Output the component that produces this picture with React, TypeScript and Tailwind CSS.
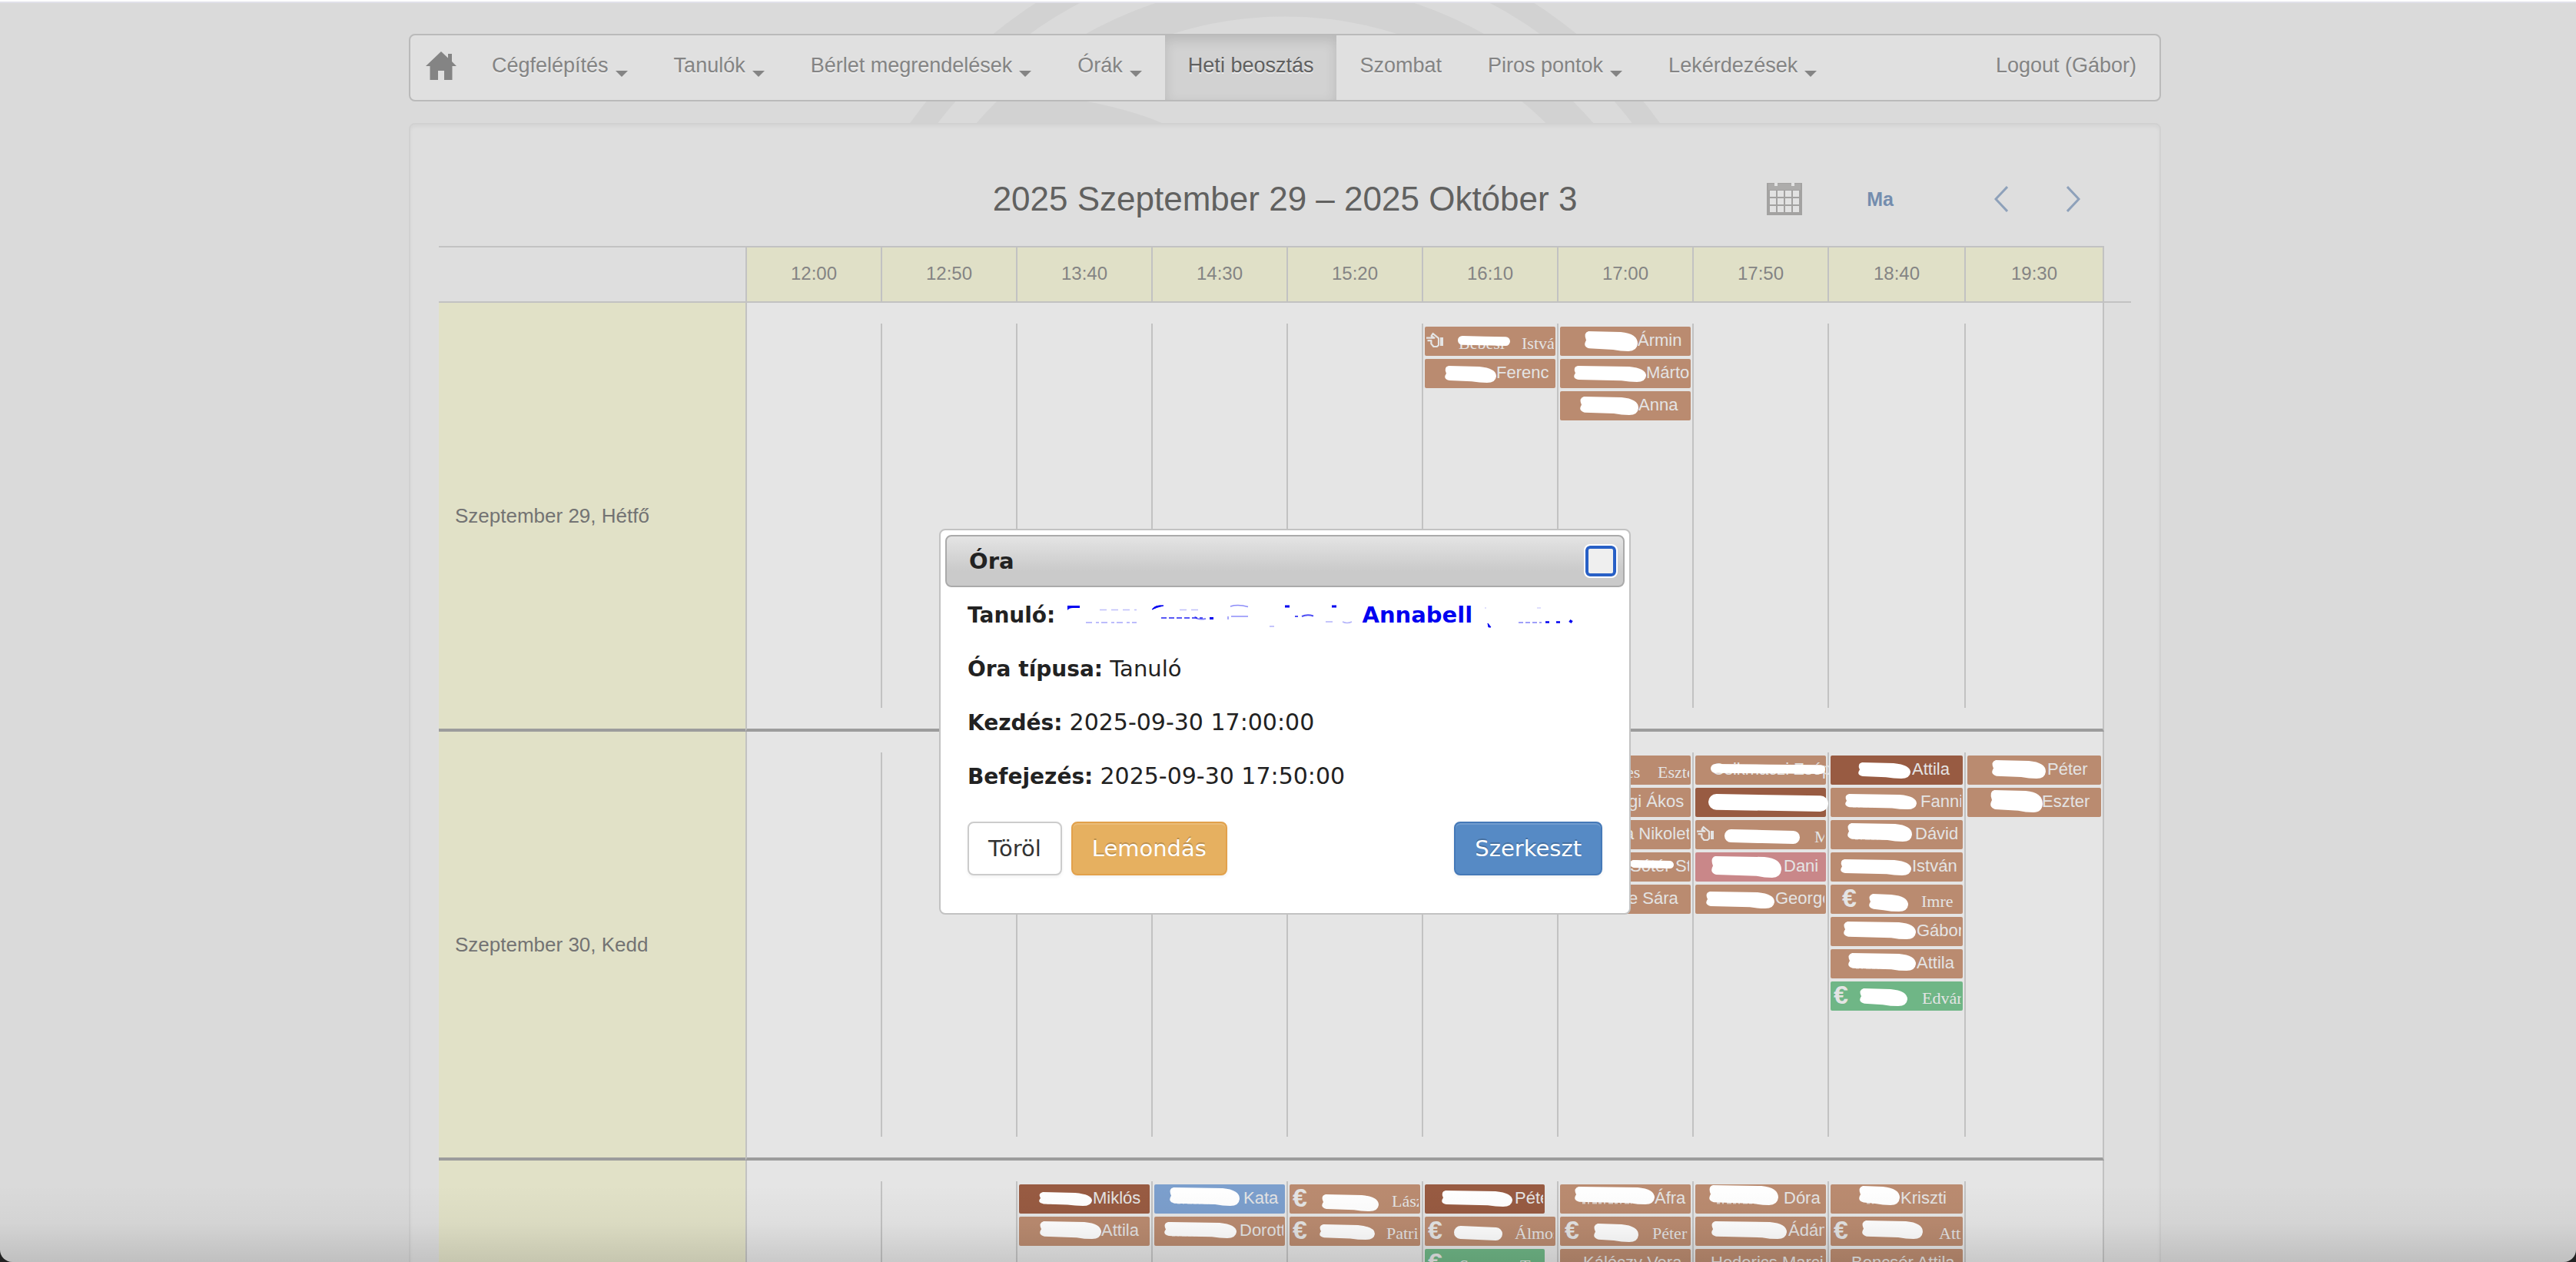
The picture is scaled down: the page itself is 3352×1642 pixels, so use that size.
import React from "react";

type Mask = [x0: number, y0: number, x1: number, y1: number];

interface Lesson {
  name?: string;
  /** Horizontal start of the visible name inside the chip. */
  at: number;
  mask?: Mask;
  band?: boolean;
  under?: string;
  underAt?: number;
  icon?: "euro" | "hand";
  iconAt?: number;
  tone?: "dark" | "blue" | "pink" | "green";
  short?: boolean;
}

const TONES = {
  base: "bg-[#ba8b70]",
  dark: "bg-[#985b42]",
  blue: "bg-[#7c9fcd]",
  pink: "bg-[#c98789]",
  green: "bg-[#6fb686]",
};

const TIMES = ["12:00", "12:50", "13:40", "14:30", "15:20", "16:10", "17:00", "17:50", "18:40", "19:30"];

const DAYS: { label: string; lessons: Record<string, Lesson[]> }[] = [
  {
    label: "Szeptember 29, Hétfő",
    lessons: {
      "16:10": [
        { icon: "hand", iconAt: 2, name: "István", at: 126, mask: [43, 12, 111, 25], band: true, under: "Bebesi", underAt: 44 },
        { name: "Ferenc", at: 93, mask: [26, 9, 93, 31] },
      ],
      "17:00": [
        { name: "Ármin", at: 101, mask: [32, 6, 101, 32] },
        { name: "Márton", at: 112, mask: [18, 9, 112, 30] },
        { name: "Anna", at: 102, mask: [26, 7, 102, 31] },
      ],
    },
  },
  {
    label: "Szeptember 30, Kedd",
    lessons: {
      "17:00": [
        { icon: "euro", iconAt: 4, name: "Eszter", at: 127, under: "es", underAt: 86 },
        { name: "gi Ákos", at: 89 },
        { name: "a Nikolett", at: 84 },
        { name: "Stefi", at: 150, mask: [91, 10, 148, 21], band: true, under: "Sótér", underAt: 91 },
        { name: "e Sára", at: 89 },
      ],
      "17:50": [
        { at: 170, mask: [20, 11, 169, 24], band: true, under: "Csikmaczi Zsóp", underAt: 22 },
        { at: 170, tone: "dark", mask: [17, 8, 173, 31], band: true },
        { icon: "hand", iconAt: 2, name: "Márk", at: 155, mask: [38, 12, 136, 31], band: true },
        { name: "Dani", at: 115, tone: "pink", mask: [21, 5, 112, 33] },
        { name: "George", at: 104, mask: [14, 9, 103, 31] },
      ],
      "18:40": [
        { name: "Attila", at: 106, tone: "dark", mask: [36, 9, 104, 30] },
        { name: "Fanni", at: 117, mask: [19, 8, 112, 28] },
        { name: "Dávid", at: 110, mask: [22, 4, 106, 28] },
        { name: "István", at: 106, mask: [13, 9, 105, 30] },
        { icon: "euro", iconAt: 15, name: "Imre", at: 118, mask: [50, 12, 101, 35] },
        { name: "Gábor", at: 112, mask: [17, 6, 111, 29] },
        { name: "Attila", at: 112, mask: [23, 5, 111, 28] },
        { icon: "euro", iconAt: 4, name: "Edvárd", at: 119, tone: "green", mask: [38, 9, 100, 32] },
      ],
      "19:30": [
        { name: "Péter", at: 104, mask: [32, 6, 102, 30] },
        { name: "Eszter", at: 97, mask: [30, 3, 98, 32] },
      ],
    },
  },
  {
    label: "Október 1, Szerda",
    lessons: {
      "13:40": [
        { name: "Miklós", at: 96, tone: "dark", mask: [26, 10, 95, 28] },
        { name: "Attila", at: 107, mask: [27, 6, 107, 29] },
      ],
      "14:30": [
        { name: "Kata", at: 116, tone: "blue", mask: [20, 4, 111, 28] },
        { name: "Dorottya", at: 111, mask: [13, 7, 107, 28] },
      ],
      "15:20": [
        { icon: "euro", iconAt: 4, name: "László", at: 133, mask: [42, 13, 116, 35] },
        { icon: "euro", iconAt: 4, name: "Patrik", at: 126, mask: [39, 10, 111, 30] },
      ],
      "16:10": [
        { name: "Péter", at: 117, tone: "dark", short: true, mask: [22, 8, 114, 29] },
        { icon: "euro", iconAt: 4, name: "Álmos", at: 117, mask: [38, 12, 101, 31], band: true },
        { icon: "euro", iconAt: 4, name: "Tamás", at: 124, tone: "green", short: true, under: "Szentes", underAt: 45 },
      ],
      "17:00": [
        { name: "Áfra", at: 123, mask: [19, 3, 123, 26] },
        { icon: "euro", iconAt: 6, name: "Péter", at: 120, mask: [44, 9, 102, 33] },
        { name: "Kálóczy Vera", at: 30 },
      ],
      "17:50": [
        { name: "Dóra", at: 115, mask: [18, 1, 108, 27] },
        { name: "Ádám", at: 121, mask: [21, 6, 119, 29] },
        { name: "Hederics Marci", at: 20 },
      ],
      "18:40": [
        { name: "Kriszti", at: 91, mask: [37, 2, 90, 27] },
        { icon: "euro", iconAt: 4, name: "Attila", at: 141, mask: [41, 5, 120, 29] },
        { name: "Bencsér Attila", at: 27 },
      ],
    },
  },
];

function Scribble({ mask, band, plain }: { mask: Mask; band?: boolean; plain: boolean }) {
  const [x0, y0, x1, y1] = mask;
  const h = y1 - y0;
  if (band) {
    const r = h * 0.45;
    return (
      <path
        d={`M${x0 + r} ${y0 + r} L${(x0 + x1) / 2} ${y0 + h / 2} L${x1 - r} ${y1 - r}`}
        fill="none"
        stroke="#fff"
        strokeWidth={r * 2}
        strokeLinecap="round"
        strokeLinejoin="round"
      />
    );
  }
  const d =
    `M${x0 + 5} ${y0} L${x1 - 22} ${y0 + 1} Q${x1} ${y0 + 3} ${x1} ${y0 + h * 0.62} ` +
    `Q${x1 - 1} ${y1} ${x1 - 12} ${y1} Q${x1 - 22} ${y1} ${x1 - 32} ${y1 - h * 0.08} ` +
    `L${x0 + 6} ${y0 + h * 0.86} Q${x0 - 3} ${y0 + h * 0.76} ${x0 + 2} ${y0 + h * 0.45} Q${x0 - 2} ${y0 + 2} ${x0 + 5} ${y0} Z`;
  return (
    <>
      {plain && (
        <path d={`M${x0 + 10} 24 H${x1 - 30}`} stroke="#e4e4e4" strokeWidth="3" strokeDasharray="4 3 2 4 6 2" opacity=".75" />
      )}
      <path d={d} fill="#fff" />
    </>
  );
}

function HandIcon({ x }: { x: number }) {
  return (
    <g transform={`translate(${x} 7)`}>
      <path
        d="M0 7.6 H10.5 L6.6 5.2 L8.6 2 L16 8.2 V17 L13.8 19 H9.4 L6.4 15.4 V11.2 H1.5"
        fill="none"
        stroke="#e4e4e4"
        strokeWidth="2.2"
        strokeLinejoin="round"
      />
      <path d="M18 7 H22 V18 H18 Z" fill="#e4e4e4" />
    </g>
  );
}

function LessonChip({ lesson }: { lesson: Lesson }) {
  const { name, at, mask, band, under, underAt, icon, iconAt = 4, tone, short } = lesson;
  const serif = Boolean(icon);
  return (
    <button
      type="button"
      className={`flex h-[38px] rounded-[2px] text-left text-[22px] leading-9 whitespace-pre text-[#e4e4e4] ${
        TONES[tone ?? "base"]
      } ${short ? "w-[156px]" : "w-full"} ${
        serif ? "font-['Liberation_Serif',serif]" : "font-['Liberation_Sans',sans-serif]"
      }`}
    >
      <svg width={at} height="38" className="shrink-0 overflow-visible" aria-hidden="true">
        {icon === "hand" && <HandIcon x={iconAt} />}
        {icon === "euro" && (
          <text x={iconAt} y="29" fontSize="34" fontWeight="700" fill="#e4e4e4" className="font-['Liberation_Sans',sans-serif]">
            €
          </text>
        )}
        {under && (
          <text x={underAt} y={serif ? 29 : 25} fontSize="22" fill="#e4e4e4">
            {under}
          </text>
        )}
        {mask && <Scribble mask={mask} band={band} plain={!under} />}
      </svg>
      <span className={`mr-[2px] min-w-0 flex-1 overflow-hidden ${serif ? "pt-1" : ""}`}>{name}</span>
    </button>
  );
}

const NAV = [
  { label: "Cégfelépítés", menu: true },
  { label: "Tanulók", menu: true },
  { label: "Bérlet megrendelések", menu: true },
  { label: "Órák", menu: true },
  { label: "Heti beosztás", active: true },
  { label: "Szombat" },
  { label: "Piros pontok", menu: true },
  { label: "Lekérdezések", menu: true },
];

function NavBar() {
  return (
    <nav className="flex h-[88px] items-stretch rounded-lg border-2 border-[#bababa] bg-[#e0e0e0] text-[27px] leading-[79px] text-[#848484] [text-shadow:0_2px_0_#eaeaea]">
      <a href="#home" aria-label="Home" className="flex items-center pr-4 pl-5">
        <svg width="40" height="38" viewBox="0 0 40 38" className="mb-1">
          <path d="M20 0 L29 8.500 V3 H34 V13 L40 19 H34.500 V37 H24 V25 H16 V37 H5.500 V19 H0 Z" fill="#848484" />
        </svg>
      </a>
      {NAV.map((item) => (
        <a
          key={item.label}
          href="#"
          className={`flex px-[30px] ${
            item.active ? "bg-[#d2d2d2] text-[#606060] shadow-[inset_0_6px_16px_rgba(0,0,0,0.12)]" : ""
          }`}
        >
          {item.label}
          {item.menu && (
            <svg width="16" height="8" viewBox="0 0 16 8" className="mt-[46px] ml-[9px]">
              <path d="M0 0 H16 L8 8 Z" fill="#848484" />
            </svg>
          )}
        </a>
      ))}
      <a href="#logout" className="ml-auto px-[30px]">
        Logout (Gábor)
      </a>
    </nav>
  );
}

function CalendarIcon() {
  return (
    <svg width="46" height="42" viewBox="0 0 46 42">
      <path d="M0 0 H46 V42 H0 Z" fill="#a3a2a1" />
      <path d="M2 1 H44 V9 H2 Z" fill="#adacab" />
      <path d="M10 0 h4 v4 h-4 z M32 0 h4 v4 h-4 z" fill="#e2e2e2" />
      {[10, 20, 30].map((y) =>
        [4, 14, 24, 34].map((x) => <rect key={`${x}-${y}`} x={x} y={y} width="8" height="8" fill="#e2e2e2" />),
      )}
    </svg>
  );
}

function CalendarHeader() {
  return (
    <header className="grid h-[158px] grid-cols-[1fr_auto_1fr] items-center pt-9">
      <span />
      <h1 className="text-[44px] leading-[52px] text-[#616160]">2025 Szeptember 29 – 2025 Október 3</h1>
      <div className="flex items-center justify-end pr-[66px] text-[#748dae]">
        <button type="button" aria-label="Naptár">
          <CalendarIcon />
        </button>
        <button type="button" className="ml-[84px] text-[25px] leading-8 font-bold">
          Ma
        </button>
        <button type="button" aria-label="Előző" className="ml-[131px]">
          <svg width="18" height="34" viewBox="0 0 18 34" fill="none" stroke="#8ea1ba" strokeWidth="3">
            <path d="M17 1 L2 17 L17 33" />
          </svg>
        </button>
        <button type="button" aria-label="Következő" className="ml-[76px]">
          <svg width="18" height="34" viewBox="0 0 18 34" fill="none" stroke="#8ea1ba" strokeWidth="3">
            <path d="M1 1 L16 17 L1 33" />
          </svg>
        </button>
      </div>
    </header>
  );
}

function WeekTable() {
  return (
    <table className="w-full table-fixed border-separate border-spacing-0">
      <colgroup>
        <col className="w-[399px]" />
        {TIMES.slice(0, 8).map((t) => (
          <col key={t} className="w-[176px]" />
        ))}
        <col className="w-[178px]" />
        <col />
        <col className="w-[35px]" />
      </colgroup>
      <thead>
        <tr className="h-[74px] text-2xl text-[#848484]">
          <td className="border-y-2 border-[#c2c2c2]" />
          {TIMES.map((t) => (
            <th
              key={t}
              scope="col"
              className="border-y-2 border-l-2 border-[#c2c2c2] bg-[#e0e0c7] p-0 pb-0.5 font-normal last-of-type:border-r-2"
            >
              {t}
            </th>
          ))}
          <td className="border-b-2 border-[#c2c2c2]" />
        </tr>
      </thead>
      <tbody>
        {DAYS.map((day) => (
          <tr key={day.label}>
            <th
              scope="row"
              className="border-b-4 border-[#9c9c9c] bg-[#e1e1c7] pl-[21px] text-left align-middle text-[26px] leading-8 font-normal text-[#737373]"
            >
              {day.label}
            </th>
            {TIMES.map((t, i) => (
              <td
                key={t}
                className={`border-b-4 border-b-[#9c9c9c] bg-[#e5e5e5] p-0 py-[27px] align-top ${
                  i === 0 ? "border-l-2 border-l-[#c2c2c2]" : ""
                } ${i === 9 ? "border-r-2 border-r-[#c2c2c2]" : ""}`}
              >
                <div
                  className={`flex h-[500px] flex-col gap-1 px-[2px] pt-1 ${i === 0 ? "" : "border-l-2 border-[#c2c2c2]"}`}
                >
                  {(day.lessons[t] ?? []).map((lesson, n) => (
                    <LessonChip key={n} lesson={lesson} />
                  ))}
                </div>
              </td>
            ))}
            <td />
          </tr>
        ))}
      </tbody>
    </table>
  );
}

function Rings() {
  return (
    <svg width="1200" height="160" viewBox="1072 0 1200 160" fill="none" stroke="#d2d2d2" aria-hidden="true">
      <circle cx="1672" cy="507" r="584" strokeWidth="29" />
      <circle cx="1672" cy="507" r="508" strokeWidth="45" />
      <path d="M1355 128 H1392 Q1465 140 1512 160 H1320 Z" fill="#d2d2d2" stroke="none" />
    </svg>
  );
}

function ErasedName() {
  return (
    <svg width="390" height="36" viewBox="0 0 390 36" fill="none" stroke="#0000f0" className="inline-block align-[-8px]" aria-hidden="true">
      <g transform="translate(6 0)">
        <path d="M0 6 H16 V9 H7 Q2 9 0 12 Z" fill="#0000f0" stroke="none" />
        <path d="M110 11 Q114 5 125 6 Q116 8 110 11 Z" fill="#0000f0" />
        <path d="M24 28 H90" strokeDasharray="8 5 4 3" opacity=".35" strokeWidth="1.500" />
        <path d="M42 11.500 H90 M146 11.500 H176" strokeDasharray="9 6" opacity=".25" strokeWidth="1.500" />
        <path d="M122 22 H176" strokeDasharray="7 3" opacity=".65" strokeWidth="2" />
        <path d="M166 20 Q168 25 180 23" opacity=".5" strokeWidth="2" />
        <path d="M185 21 h5 v3 h-5 z" fill="#0000f0" stroke="none" />
        <path d="M212 7 Q222 4 235 7.500 M213 20 H235 M209 20 v4" opacity=".45" strokeWidth="1.500" />
        <path d="M283 5.500 h6 v3 h-6 z M344 5.500 h6 v3 h-6 z" fill="#0000f0" stroke="none" />
        <path d="M296 20 h4 M305 20 Q312 17 320 19.500" opacity=".7" strokeWidth="2" />
        <path d="M336 27 H345 M358 27 Q364 30 370 27 M263 33 h6" opacity=".3" strokeWidth="1.500" />
      </g>
    </svg>
  );
}

function ErasedNote() {
  return (
    <svg width="136" height="36" viewBox="0 0 136 36" fill="none" stroke="#0000f0" className="inline-block align-[-8px]" aria-hidden="true">
      <path d="M20 29 L24 34 H21 Z" fill="#0000f0" />
      <path d="M17 10 v-2 M84 9 h5" opacity=".25" />
      <path d="M60 28 H90" strokeDasharray="6 3" opacity=".5" strokeWidth="1.500" />
      <path d="M95 27.500 h5 M109 27.500 h5" strokeWidth="2.500" />
      <path d="M129 25 L127 28" strokeWidth="4" />
    </svg>
  );
}

function LessonDialog() {
  return (
    <section
      role="dialog"
      aria-labelledby="lesson-title"
      className="w-[900px] rounded-lg border-2 border-[#c2c2c2] bg-white p-1.5 font-['DejaVu_Sans',sans-serif] text-[29px] leading-10 text-[#222]"
    >
      <div className="flex h-[68px] items-center justify-between rounded-lg border-2 border-[#aaa] bg-linear-to-b from-[#e4e4e4] to-[#cacaca] to-70% pr-[9px] pl-[29px]">
        <h2 id="lesson-title" className="font-bold">
          Óra
        </h2>
        <button
          type="button"
          aria-label="Bezárás"
          className="size-10 rounded-md border-4 border-[#2860c6] bg-[#efefef] outline-2 outline-white"
        />
      </div>
      <div className="flex flex-col gap-[30px] px-[29px] pt-[16px] pb-[43px] whitespace-nowrap">
        <p className="h-10">
          <strong className="text-[28px]">Tanuló:</strong>{" "}
          <a href="#student" className="font-bold text-[#0000f0]">
            <ErasedName />
            Annabell
            <ErasedNote />
          </a>
        </p>
        <p className="h-10">
          <strong className="text-[28px]">Óra típusa:</strong> Tanuló
        </p>
        <p className="h-10">
          <strong className="text-[28px]">Kezdés:</strong> <span className="text-[30px]">2025-09-30 17:00:00</span>
        </p>
        <p className="h-10">
          <strong className="text-[28px]">Befejezés:</strong> <span className="text-[30px]">2025-09-30 17:50:00</span>
        </p>
        <div className="mt-[9px] flex gap-3">
          <button type="button" className="h-[70px] rounded-lg border-2 border-[#ccc] bg-white px-[25px] text-[#333] shadow-[0_2px_4px_rgba(0,0,0,0.06)]">
            Töröl
          </button>
          <button
            type="button"
            className="h-[70px] rounded-lg border-2 border-[#e2a14b] bg-[#e6b060] px-[25px] text-white shadow-[inset_0_2px_0_rgba(255,255,255,0.16),0_2px_4px_rgba(0,0,0,0.06)] [text-shadow:0_-2px_0_rgba(0,0,0,0.2)]"
          >
            Lemondás
          </button>
          <button
            type="button"
            className="ml-auto h-[70px] rounded-lg border-2 border-[#4579b8] bg-[#568ac5] px-[25px] text-white shadow-[inset_0_2px_0_rgba(255,255,255,0.16),0_2px_4px_rgba(0,0,0,0.06)] [text-shadow:0_-2px_0_rgba(0,0,0,0.2)]"
          >
            Szerkeszt
          </button>
        </div>
      </div>
    </section>
  );
}

export default function App() {
  return (
    <div className="h-screen bg-[#222]">
      <div className="relative h-screen overflow-hidden rounded-b-[16px] bg-[#dadada] font-['Liberation_Sans',sans-serif]">
        <div className="absolute inset-x-0 top-0 flex justify-center pr-2">
          <Rings />
        </div>
        <div className="relative border-t-2 border-white">
          <div className="border-t-2 border-[#e1e1e9] pt-10 pr-2">
            <div className="mx-auto flex max-w-[2280px] flex-col gap-7">
              <NavBar />
              <main className="rounded-lg border-2 border-[#d1d1d1] bg-[#dedede] px-[37px] shadow-[inset_0_3px_4px_rgba(0,0,0,0.04)]">
                <CalendarHeader />
                <WeekTable />
              </main>
            </div>
          </div>
        </div>
        <div className="pointer-events-none absolute inset-x-0 bottom-0 h-[100px] bg-linear-to-b from-transparent via-black/3 to-black/12" />
        <div className="absolute inset-x-0 top-[688px] flex justify-center pr-2">
          <LessonDialog />
        </div>
      </div>
    </div>
  );
}
